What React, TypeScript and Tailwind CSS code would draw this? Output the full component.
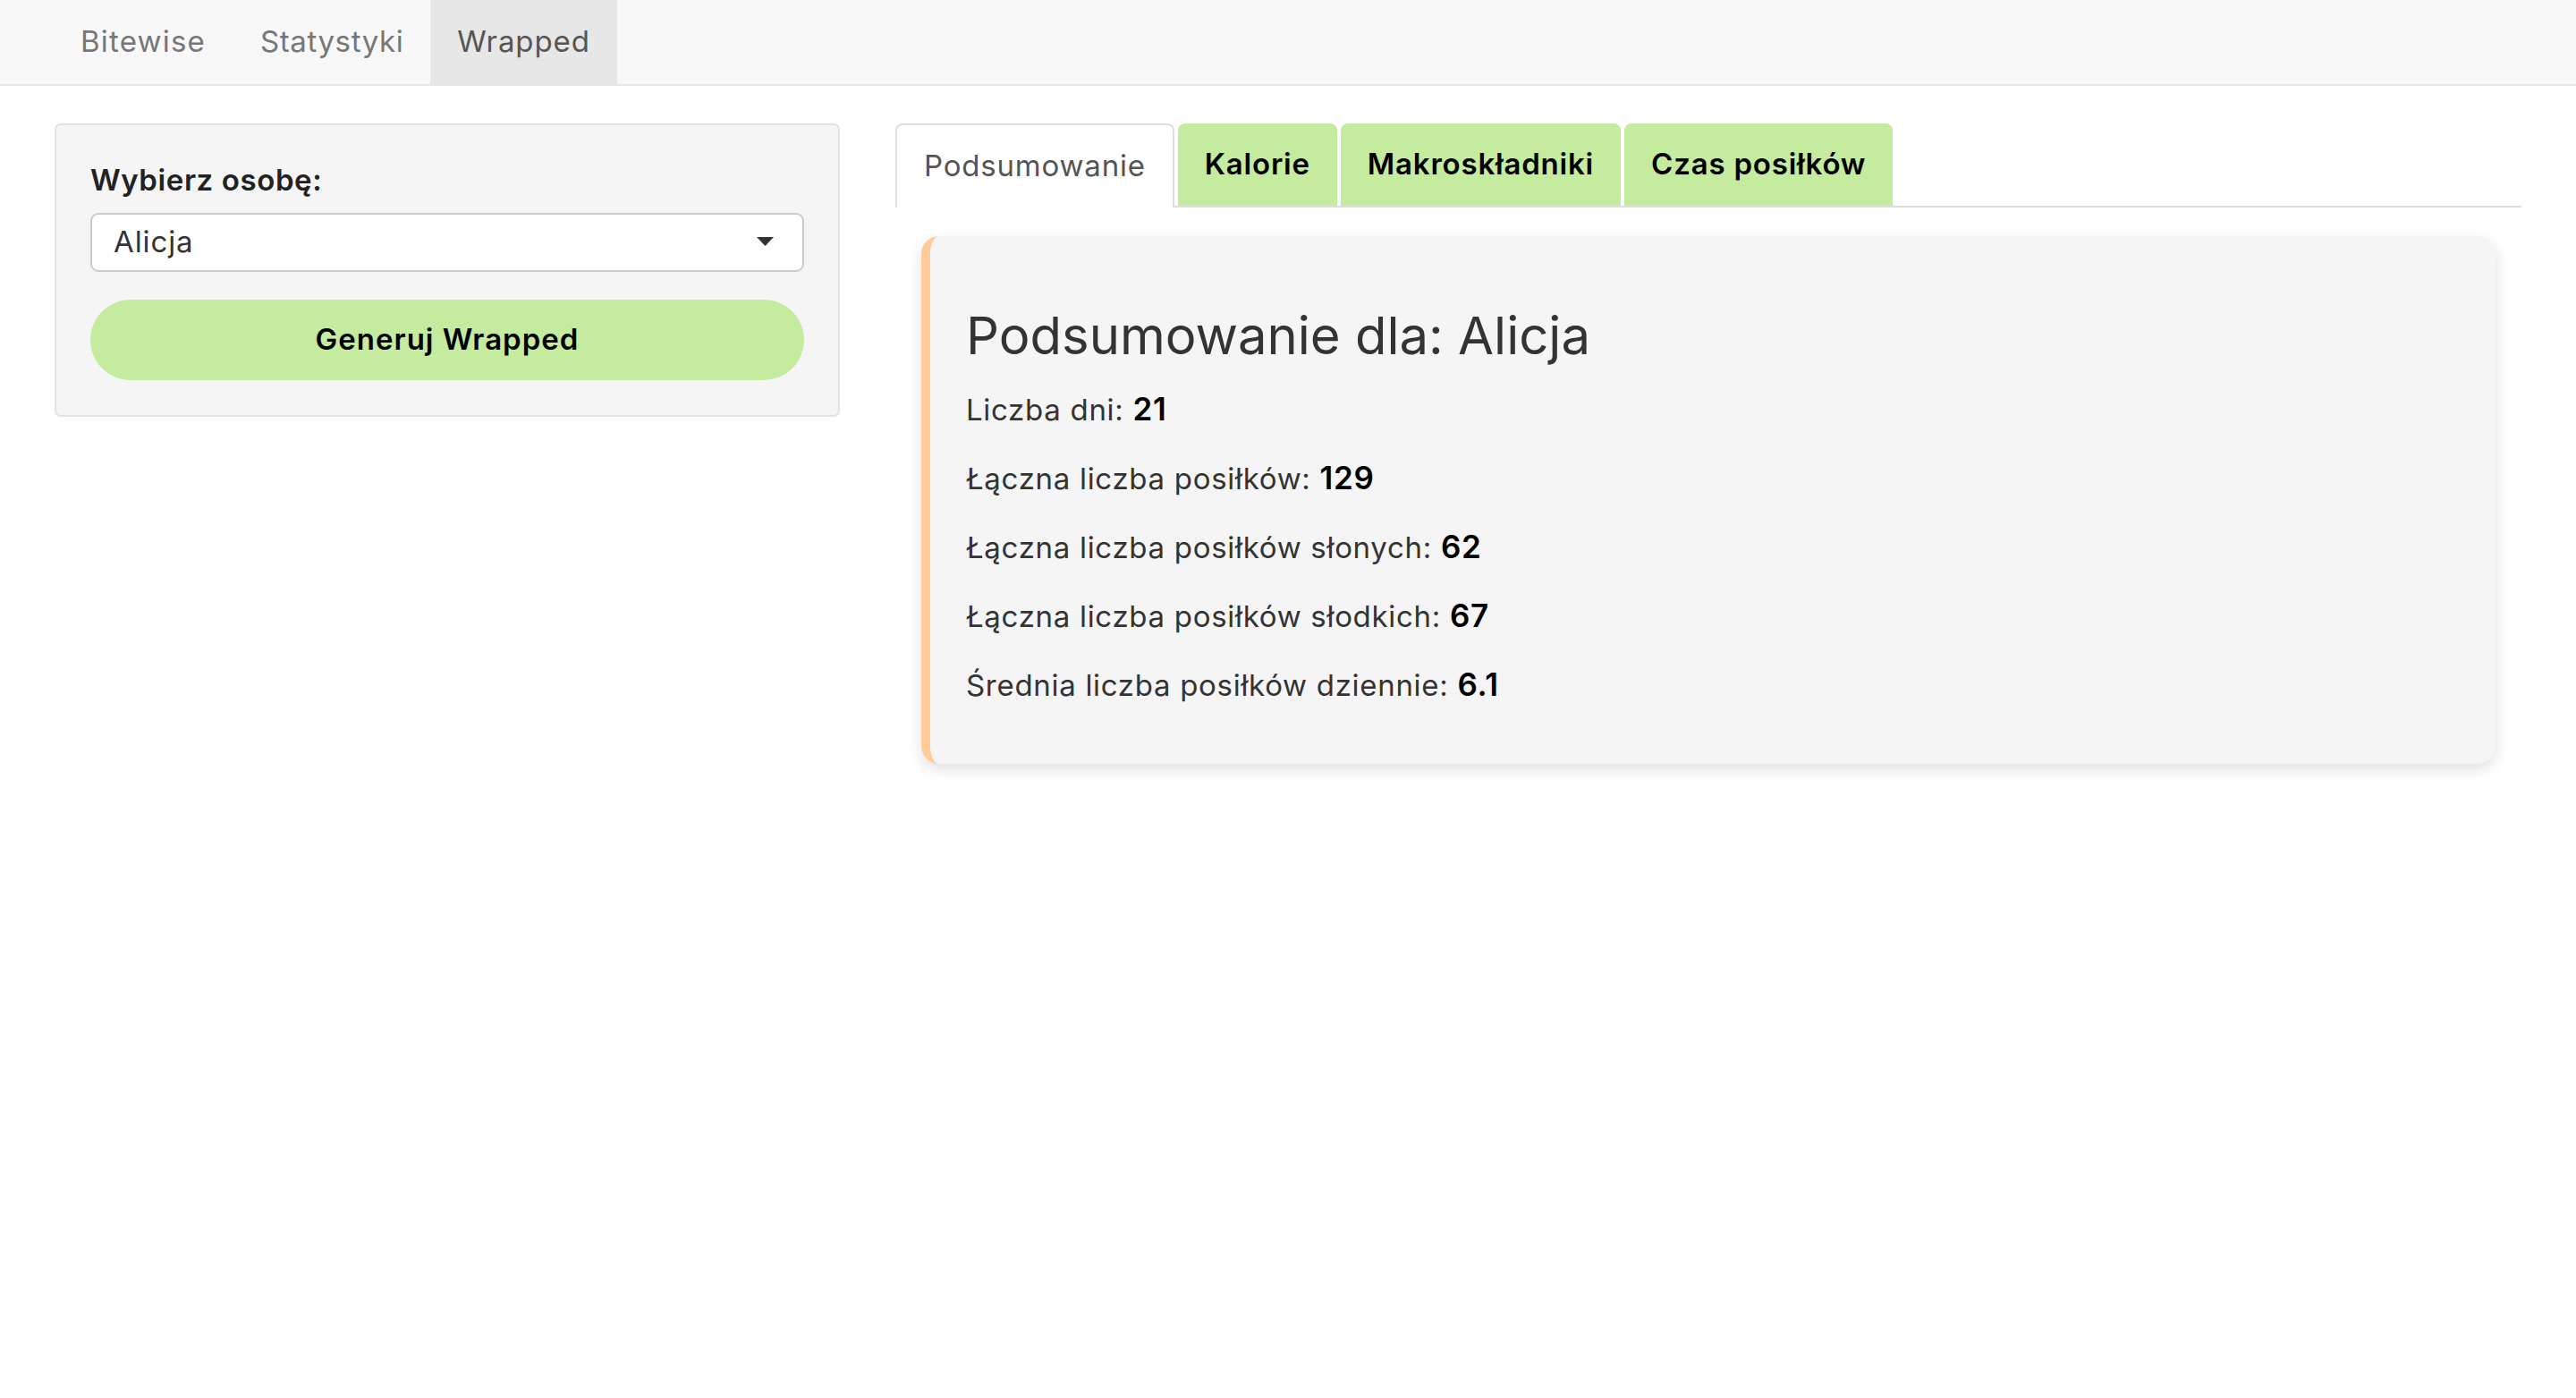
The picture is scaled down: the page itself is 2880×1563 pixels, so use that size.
import React, { useState } from 'react';

const tabs = ['Podsumowanie', 'Kalorie', 'Makroskładniki', 'Czas posiłków'];

const stats: { label: string; value: string }[] = [
  { label: 'Liczba dni:', value: '21' },
  { label: 'Łączna liczba posiłków:', value: '129' },
  { label: 'Łączna liczba posiłków słonych:', value: '62' },
  { label: 'Łączna liczba posiłków słodkich:', value: '67' },
  { label: 'Średnia liczba posiłków dziennie:', value: '6.1' },
];

export default function App() {
  const [activeTab, setActiveTab] = useState('Podsumowanie');
  const [person, setPerson] = useState('Alicja');

  return (
    <div className="min-h-screen w-full bg-white font-['Inter',sans-serif] text-[#333]">
      {/* NAVBAR */}
      <nav className="h-[96px] bg-[#f8f8f8] border-b-2 border-[#e7e7e7] flex pl-[59px]">
        <a className="px-[31px] flex items-center text-[33px] tracking-[1.2px] text-[#777]">Bitewise</a>
        <a className="px-[30px] flex items-center text-[33px] tracking-[0.6px] text-[#777]">Statystyki</a>
        <a className="px-[30px] flex items-center text-[33px] tracking-[0.9px] text-[#555] bg-[#e7e7e7]">Wrapped</a>
      </nav>

      <div className="flex gap-[62px] px-[61px] pt-[42px]">
        {/* SIDEBAR */}
        <div className="w-[878px] shrink-0">
          <div className="bg-[#f5f5f5] border-2 border-[#e3e3e3] rounded-[7px] px-[38px] pt-[38px] pb-[39px]">
            <label className="block text-[33px] font-semibold leading-[46px] tracking-[0.6px] text-[#222]">Wybierz osobę:</label>
            <div className="relative mt-[14px]">
              <select
                value={person}
                onChange={(e) => setPerson(e.target.value)}
                className="w-full h-[66px] appearance-none bg-white border-2 border-[#cccccc] rounded-[9px] pl-[24px] text-[33px] tracking-[0.9px] text-[#333] outline-none"
              >
                <option>Alicja</option>
                <option>Bartek</option>
              </select>
              <svg className="absolute right-[34px] top-[27px] w-[19px] h-[10px]" viewBox="0 0 19 10">
                <polygon points="0,0 19,0 9.5,10" fill="#333" />
              </svg>
            </div>
            <button className="mt-[31px] w-full h-[90px] rounded-[46px] bg-[#c5eb9e] text-[33px] font-semibold tracking-[1px] text-black">
              Generuj Wrapped
            </button>
          </div>
        </div>

        {/* MAIN */}
        <div className="flex-1">
          <div className="flex gap-[4px] border-b-2 border-[#dddddd] h-[94px]">
            {tabs.map((t) =>
              t === activeTab ? (
                <button
                  key={t}
                  onClick={() => setActiveTab(t)}
                  className="px-[30px] h-[94px] bg-white border-2 border-b-0 border-[#dddddd] rounded-t-[8px] text-[33px] tracking-[0.8px] text-[#555]"
                >
                  {t}
                </button>
              ) : (
                <button
                  key={t}
                  onClick={() => setActiveTab(t)}
                  className="px-[30px] h-[92px] bg-[#c5eb9e] rounded-t-[8px] text-[33px] font-semibold tracking-[0.8px] text-black"
                >
                  {t}
                </button>
              )
            )}
          </div>

          <div className="mx-[29px] mt-[32px] bg-[#f5f5f5] border-l-[10px] border-[#ffcc99] rounded-[20px] shadow-[0_6px_16px_rgba(0,0,0,0.12)] pl-[40px] pr-[40px] pt-[76px] pb-[65px]">
            <h2 className="text-[58px] leading-[70px] text-[#333] mb-[25px]">Podsumowanie dla: {person}</h2>
            <div className="flex flex-col gap-[31px]">
              {stats.map((s) => (
                <p key={s.label} className="h-[46px] text-[33px] leading-[46px] tracking-[0.7px] text-[#333]">
                  {s.label} <b className="text-[35px] leading-none font-semibold text-black">{s.value}</b>
                </p>
              ))}
            </div>
          </div>
        </div>
      </div>
    </div>
  );
}
